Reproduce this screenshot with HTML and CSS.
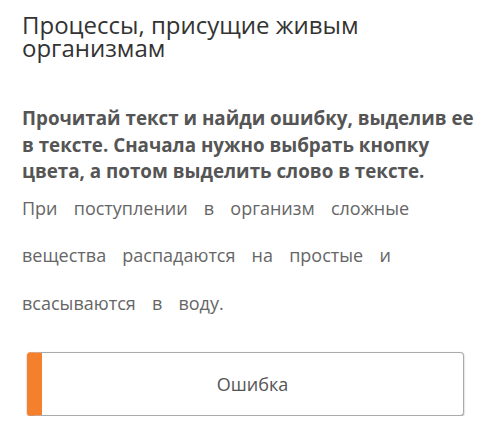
FILE: index.html
```html
<!DOCTYPE html>
<html lang="ru">
<head>
  <meta charset="UTF-8">
  <title>Задание</title>
  <link rel="stylesheet" href="styles.css">
</head>
<body>
  <div class="zadanie">
    <h1 class="titulo">Процессы, присущие живым организмам</h1>
    <p class="instrucao">Прочитай текст и найди ошибку, выделив ее в тексте. Сначала нужно выбрать кнопку цвета, а потом выделить слово в тексте.</p>
    <p class="texto">При поступлении в организм сложные вещества распадаются на простые и всасываются в воду.</p>
    <div class="botoes">
      <button class="botao-cor">Ошибка</button>
    </div>
  </div>
</body>
</html>
```

FILE: styles.css
```css
body {
  margin: 0;
  background: #ffffff;
  font-family: "Open Sans", sans-serif;
}
.zadanie {
  padding: 13px 22px 0 22px;
}
.titulo {
  margin: 0;
  font-size: 24px;
  font-weight: 400;
  line-height: 23px;
  color: #333333;
}
.instrucao {
  margin: 46px 0 0 0;
  font-size: 18.8px;
  font-weight: 700;
  line-height: 26.5px;
  color: #555555;
}
.texto {
  margin: 0;
  width: 400px;
  font-size: 18px;
  line-height: 47.5px;
  word-spacing: 11.5px;
  color: #666666;
}
.botoes {
  margin-top: 25px;
  padding-left: 5px;
}
.botao-cor {
  display: block;
  width: 437px;
  height: 64px;
  border: 1px solid #aaaaaa;
  border-left: 15px solid #f47f2c;
  border-radius: 4px;
  box-shadow: 0 1px 2px rgba(0, 0, 0, 0.35);
  background: #ffffff;
  font-family: "Open Sans", sans-serif;
  font-size: 18px;
  color: #555555;
  padding: 0;
}
```
